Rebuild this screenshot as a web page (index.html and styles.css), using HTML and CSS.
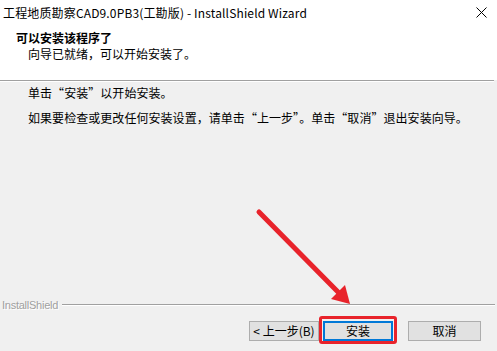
FILE: index.html
```html
<!DOCTYPE html>
<html lang="zh-CN">
<head>
<meta charset="utf-8">
<title>InstallShield Wizard</title>
<link rel="stylesheet" href="styles.css">
</head>
<body>
<div class="window">
  <div class="top">
    <div class="titlebar">
      <span class="title">工程地质勘察CAD9.0PB3(工勘版) - InstallShield Wizard</span>
      <svg class="close" width="11" height="11" viewBox="0 0 11 11"><path d="M0.5 0.5 L10.5 10.5 M10.5 0.5 L0.5 10.5" stroke="#000" stroke-width="1" fill="none"/></svg>
    </div>
    <div class="header">
      <div class="h-title">可以安装该程序了</div>
      <div class="h-sub">向导已就绪，可以开始安装了。</div>
    </div>
  </div>
  <div class="sep-top"></div>
  <div class="content">
    <p class="line">单击“安装”以开始安装。</p>
    <p class="line">如果要检查或更改任何安装设置，请单击“上一步”。单击“取消”退出安装向导。</p>
  </div>
  <div class="brand">
    <span class="brand-text">InstallShield</span>
    <span class="brand-line"></span>
  </div>
  <div class="buttons">
    <button class="btn btn-back">&lt; 上一步(B)</button>
    <button class="btn btn-default">安装</button>
    <button class="btn btn-cancel">取消</button>
  </div>
  <svg class="arrow" width="497" height="351" viewBox="0 0 497 351">
    <line x1="259" y1="212" x2="340" y2="294" stroke="#e8232b" stroke-width="5" stroke-linecap="round"/>
    <polygon points="350,304 331,299 345,285" fill="#e8232b"/>
  </svg>
</div>
</body>
</html>
```

FILE: styles.css
```css
* { box-sizing: border-box; }
html, body { margin: 0; padding: 0; }
body {
  width: 497px;
  height: 351px;
  overflow: hidden;
  background: #f0f0f0;
  font-family: "Noto Sans CJK SC", "Liberation Sans", sans-serif;
  font-size: 12px;
  color: #000;
}
.window {
  position: relative;
  width: 497px;
  height: 351px;
  display: flex;
  flex-direction: column;
  background: #f0f0f0;
}
.top {
  background: #fff;
  height: 80px;
  display: flex;
  flex-direction: column;
}
.titlebar {
  height: 26px;
  display: flex;
  align-items: center;
  justify-content: space-between;
  padding: 0 10px 0 3px;
}
.title {
  font-size: 12px;
  line-height: 16px;
  letter-spacing: 0.15px;
  color: #000;
}
.close { display: block; margin-top: -1px; }
.header {
  padding-left: 16px;
  padding-top: 4px;
}
.h-title {
  font-weight: bold;
  font-size: 12px;
  line-height: 16px;
}
.h-sub {
  padding-left: 12px;
  font-size: 12px;
  line-height: 16px;
}
.sep-top {
  height: 2px;
  margin-right: 3px;
  border-top: 1px solid #a0a0a0;
  border-bottom: 1px solid #fff;
}
.content {
  flex: 1;
  padding: 4px 0 0 28px;
}
.line {
  margin: 0 0 11px 0;
  font-size: 12px;
  line-height: 14px;
  letter-spacing: 0.05px;
}
.brand {
  display: flex;
  align-items: center;
  gap: 4px;
  height: 14px;
  padding-left: 2px;
  padding-right: 2px;
  margin-bottom: 9px;
}
.brand-text {
  font-family: "Liberation Sans", sans-serif;
  font-size: 11px;
  letter-spacing: -0.25px;
  color: #a0a0a0;
  text-shadow: 1px 1px 0 #fff;
  line-height: 14px;
}
.brand-line {
  flex: 1;
  height: 2px;
  border-top: 1px solid #a0a0a0;
  border-bottom: 1px solid #fff;
}
.buttons {
  display: flex;
  padding-left: 249px;
  height: 30px;
}
.btn {
  height: 20px;
  padding: 0;
  background: #e1e1e1;
  border: 1px solid #adadad;
  font-family: "Noto Sans CJK SC", "Liberation Sans", sans-serif;
  font-size: 12px;
  line-height: 16px;
  color: #000;
}
.btn-back { width: 70px; }
.btn-default {
  width: 70px;
  margin-left: 4px;
  border: 2px solid #0078d7;
  position: relative;
}
.btn-default::after {
  content: "";
  position: absolute;
  left: -6px;
  right: -6px;
  top: -7px;
  bottom: -5px;
  border: 3px solid #e8232b;
  border-radius: 3px;
}
.btn-cancel {
  width: 73px;
  margin-left: 15px;
}
.arrow {
  position: absolute;
  left: 0;
  top: 0;
  pointer-events: none;
}
```
